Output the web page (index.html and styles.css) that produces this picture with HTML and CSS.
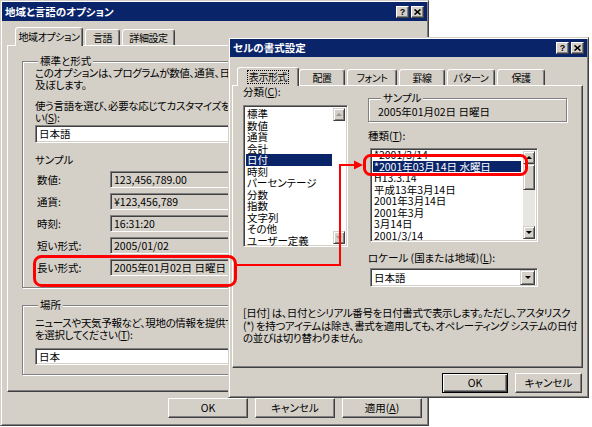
FILE: index.html
```html
<!DOCTYPE html>
<html lang="ja">

<head>
    <meta charset="UTF-8">
    <meta name="viewport" content="width=device-width, initial-scale=1.0">
    <title>地域と言語のオプション / セルの書式設定</title>
    <link rel="stylesheet" href="styles.css">
</head>

<body>
    <div class="desk">

        <!-- back dialog -->
        <section class="win win-region">
            <header class="titlebar">
                <span class="title">地域と言語のオプション</span>
                <span class="caps">
                    <span class="cap">?</span>
                    <span class="cap"><svg width="7" height="6" viewBox="0 0 7 6"><path d="M0.5 0.5 L6.5 5.5 M6.5 0.5 L0.5 5.5" stroke="#000" stroke-width="1.6"/></svg></span>
                </span>
            </header>

            <nav class="tabs">
                <span class="tab on">地域オプション</span>
                <span class="tab">言語</span>
                <span class="tab">詳細設定</span>
            </nav>

            <div class="panel region-panel">
                <fieldset class="group std">
                    <legend>標準と形式</legend>
                    <p class="note">このオプションは、プログラムが数値、通貨、日付、時刻を表示する方法に影響を<br>及ぼします。</p>
                    <p class="note note-lang">使う言語を選び、必要な応じてカスタマイズを行ってくださ<br>い(<u>S</u>):</p>
                    <div class="field lang">日本語</div>
                    <div class="sample-title">サンプル</div>
                    <div class="rows">
                        <div class="row"><span class="row-label">数値:</span><span class="readout">123,456,789.00</span></div>
                        <div class="row"><span class="row-label">通貨:</span><span class="readout">¥123,456,789</span></div>
                        <div class="row"><span class="row-label">時刻:</span><span class="readout">16:31:20</span></div>
                        <div class="row"><span class="row-label">短い形式:</span><span class="readout">2005/01/02</span></div>
                        <div class="row"><span class="row-label">長い形式:</span><span class="readout">2005年01月02日 日曜日</span></div>
                    </div>
                </fieldset>

                <fieldset class="group place">
                    <legend>場所</legend>
                    <p class="note note-place">ニュースや天気予報など、現地の情報を提供するサービスの場所<br>を選択してください(<u>T</u>):</p>
                    <div class="field place-field">日本</div>
                </fieldset>
            </div>

            <footer class="buttons">
                <span class="btn btn-wide">OK</span>
                <span class="btn btn-wide">キャンセル</span>
                <span class="btn btn-wide">適用(<u>A</u>)</span>
            </footer>
        </section>

        <!-- front dialog -->
        <section class="win win-format">
            <header class="titlebar">
                <span class="title">セルの書式設定</span>
                <span class="caps">
                    <span class="cap">?</span>
                    <span class="cap"><svg width="7" height="6" viewBox="0 0 7 6"><path d="M0.5 0.5 L6.5 5.5 M6.5 0.5 L0.5 5.5" stroke="#000" stroke-width="1.6"/></svg></span>
                </span>
            </header>

            <nav class="tabs">
                <span class="tab on"><span class="focus">表示形式</span></span>
                <span class="tab">配置</span>
                <span class="tab">フォント</span>
                <span class="tab">罫線</span>
                <span class="tab">パターン</span>
                <span class="tab">保護</span>
            </nav>

            <div class="panel format-panel">
                <div class="format-grid">
                    <div class="col">
                        <div class="caption">分類(<u>C</u>):</div>
                        <div class="listbox cats">
                            <ul class="items">
                                <li>標準</li>
                                <li>数値</li>
                                <li>通貨</li>
                                <li>会計</li>
                                <li class="sel">日付</li>
                                <li>時刻</li>
                                <li>パーセンテージ</li>
                                <li>分数</li>
                                <li>指数</li>
                                <li>文字列</li>
                                <li>その他</li>
                                <li>ユーザー定義</li>
                            </ul>
                            <div class="vscroll">
                                <span class="sbtn"><i class="arrow up dim"></i></span>
                                <span class="track blank"></span>
                                <span class="sbtn"><i class="arrow down dim"></i></span>
                            </div>
                        </div>
                    </div>

                    <div class="col">
                        <fieldset class="group sample">
                            <legend>サンプル</legend>
                            <div class="sample-value">2005年01月02日 日曜日</div>
                        </fieldset>
                        <div class="caption caption-kind">種類(<u>T</u>):</div>
                        <div class="listbox kinds">
                            <ul class="items">
                                <li>*2001/3/14</li>
                                <li class="sel">*2001年03月14日 水曜日</li>
                                <li>H13.3.14</li>
                                <li>平成13年3月14日</li>
                                <li>2001年3月14日</li>
                                <li>2001年3月</li>
                                <li>3月14日</li>
                                <li>2001/3/14</li>
                            </ul>
                            <div class="vscroll">
                                <span class="sbtn"><i class="arrow up"></i></span>
                                <span class="thumb"></span>
                                <span class="track"></span>
                                <span class="sbtn"><i class="arrow down"></i></span>
                            </div>
                        </div>
                        <div class="caption caption-locale">ロケール (国または地域)(<u>L</u>):</div>
                        <div class="field locale">日本語<span class="sbtn drop"><i class="arrow down"></i></span></div>
                    </div>
                </div>

                <p class="desc">[日付] は、日付とシリアル番号を日付書式で表示します。ただし、アスタリスク<br>(*) を持つアイテムは除き、書式を適用しても、オペレーティング システムの日付<br>の並びは切り替わりません。</p>
            </div>

            <footer class="buttons">
                <span class="btn btn-default">OK</span>
                <span class="btn">キャンセル</span>
            </footer>
        </section>

        <!-- red call-out marks -->
        <svg class="marks" width="592" height="427" viewBox="0 0 592 427">
            <rect x="34.5" y="256.5" width="201" height="29" rx="7" fill="none" stroke="#f00" stroke-width="3"/>
            <rect x="364.5" y="155.5" width="162" height="19" rx="6" fill="none" stroke="#f00" stroke-width="3"/>
            <polyline points="236,265 340,265 340,165 355,165" fill="none" stroke="#f00" stroke-width="2"/>
            <polygon points="354,160.5 363,165 354,169.5" fill="#f00"/>
        </svg>
    </div>
</body>

</html>
```

FILE: styles.css
```css
* {
    box-sizing: border-box;
}

body {
    margin: 0;
    background: #fff;
    color: #000;
    font-family: "Noto Sans CJK JP", "Liberation Sans", sans-serif;
    font-size: 10.5px;
    font-feature-settings: "palt";
    line-height: 12px;
}

p,
ul {
    margin: 0;
    padding: 0;
}

u {
    text-underline-offset: 1px;
}

.desk {
    position: relative;
    width: 592px;
    height: 427px;
    overflow: hidden;
}

/* windows */
.win {
    display: flex;
    flex-direction: column;
    padding: 1px;
    background: #d4d0c8;
    border: 1px solid;
    border-color: #d4d0c8 #404040 #404040 #d4d0c8;
    box-shadow: inset 1px 1px #fff, inset -1px -1px #808080;
    overflow: hidden;
}

.win-region {
    width: 429px;
    height: 426px;
}

.win-format {
    position: absolute;
    left: 228px;
    top: 37px;
    width: 361px;
    height: 361px;
}

.titlebar {
    flex: none;
    display: flex;
    align-items: center;
    justify-content: space-between;
    height: 18px;
    padding: 0 3px 0 3px;
    background: #0a246a;
    color: #fff;
    font-weight: bold;
    white-space: nowrap;
}

.win-region .titlebar {
    height: 19px;
}

.caps {
    display: flex;
    gap: 2px;
}

.cap {
    display: flex;
    align-items: center;
    justify-content: center;
    width: 13px;
    height: 12px;
    background: #d4d0c8;
    border: 1px solid;
    border-color: #fff #404040 #404040 #fff;
    box-shadow: inset -1px -1px #808080;
    color: #000;
    font: bold 9px "Liberation Sans", sans-serif;
}

/* tabs */
.tabs {
    flex: none;
    position: relative;
    z-index: 1;
    display: flex;
    align-items: flex-end;
    gap: 2px;
    white-space: nowrap;
    font-size: 10px;
    letter-spacing: -0.4px;
}

.win-region .tabs {
    padding: 6px 0 0 13px;
}

.win-format .tabs {
    padding: 10px 0 0 7px;
}

.tab {
    display: flex;
    align-items: center;
    justify-content: center;
    height: 16px;
    border: 1px solid;
    border-bottom: 0;
    border-color: #fff #404040 transparent #fff;
    border-radius: 3px 3px 0 0;
    box-shadow: inset -1px 0 #808080;
    background: #d4d0c8;
}

.tab.on {
    position: relative;
    z-index: 2;
    height: 19px;
    margin-bottom: -1px;
    padding-bottom: 1px;
}

.win-region .tab:nth-child(1) { width: 68px; }
.win-region .tab:nth-child(2) { width: 35px; }
.win-region .tab:nth-child(3) { width: 53px; }

.win-format .tab:nth-child(1) { width: 62px; margin-right: -2px; }
.win-format .tab:nth-child(2) { width: 46px; }
.win-format .tab:nth-child(3) { width: 50px; }
.win-format .tab:nth-child(4) { width: 46px; }
.win-format .tab:nth-child(5) { width: 48px; }
.win-format .tab:nth-child(6) { width: 48px; }

.focus {
    padding: 0 1px;
    outline: 1px dotted #000;
    outline-offset: 0;
    line-height: 12px;
}

.panel {
    flex: none;
    border: 1px solid;
    border-color: #fff #404040 #404040 #fff;
    box-shadow: inset -1px -1px #808080;
}

/* group boxes */
.group {
    margin: 0;
    min-width: 0;
    border: 1px solid #808080;
    box-shadow: 1px 1px 0 #fff, inset 1px 1px 0 #fff;
}

.group legend {
    margin-left: 3px;
    padding: 0 2px;
    line-height: 12px;
    background: #d4d0c8;
}

/* sunken fields */
.field,
.readout,
.listbox {
    border: 1px solid;
    border-color: #808080 #fff #fff #808080;
    box-shadow: inset 1px 1px #404040, inset -1px -1px #d4d0c8;
}

.field {
    background: #fff;
    padding: 0 3px;
    white-space: nowrap;
}

.readout {
    flex: 1;
    height: 17px;
    padding: 0 3px;
    line-height: 15px;
    background: #d4d0c8;
    white-space: nowrap;
}

/* back dialog content */
.region-panel {
    height: 347px;
    margin: 0 5px;
    padding: 9px 14px 0;
}

.std {
    padding: 0 10px 11px 12px;
}

.note {
    white-space: nowrap;
    letter-spacing: -0.35px;
}

.note-lang {
    margin-top: 9px;
}

.lang {
    height: 18px;
    margin-top: 1px;
    line-height: 16px;
}

.sample-title {
    margin-top: 11px;
}

.rows {
    display: flex;
    flex-direction: column;
    gap: 5px;
    margin-top: 5px;
}

.row {
    display: flex;
    align-items: center;
    padding-left: 2px;
}

.row-label {
    width: 73px;
}

.place {
    margin-top: 11px;
    padding: 6px 10px 9px 12px;
}

.note-place {
    line-height: 11.5px;
}

.place-field {
    height: 17px;
    margin-top: 8px;
    line-height: 15px;
}

.buttons {
    flex: none;
    display: flex;
    justify-content: flex-end;
    gap: 7px;
    margin-top: 6px;
    padding-right: 5px;
}

.win-format .buttons {
    margin-top: 5px;
}

.btn {
    display: flex;
    align-items: center;
    justify-content: center;
    width: 67px;
    height: 20px;
    border: 1px solid;
    border-color: #fff #404040 #404040 #fff;
    box-shadow: inset -1px -1px #808080;
    white-space: nowrap;
}

.btn-wide {
    width: 80px;
}

.btn-default {
    width: 66px;
    border-color: #000;
    box-shadow: inset 1px 1px #fff, inset -1px -1px #404040, inset -2px -2px #808080;
}

/* front dialog content */
.format-panel {
    height: 283px;
    margin-left: 2px;
    width: 351px;
    padding: 0 10px;
}

.format-grid {
    display: grid;
    grid-template-columns: 105px 199px;
    column-gap: 20px;
}

.col {
    display: flex;
    flex-direction: column;
    align-items: flex-start;
}

.sample {
    width: 199px;
    margin-top: 6px;
    padding: 2px 8px 3px 9px;
}

.caption-kind {
    margin-top: 8px;
}

.caption-locale {
    margin-top: 10px;
}

.listbox {
    display: flex;
    padding: 2px;
    background: #fff;
    overflow: hidden;
}

.cats {
    width: 105px;
    height: 142px;
    margin-top: 7px;
}

.kinds {
    width: 168px;
    height: 94px;
    margin-top: 6px;
    margin-left: 2px;
}

.items {
    flex: 1;
    list-style: none;
    white-space: nowrap;
}

.items li {
    line-height: 11.5px;
    padding-left: 1px;
}

.cats .items {
    margin-right: 1px;
}

.kinds .items li:first-child {
    margin-top: -2px;
}

.kinds .items li.sel {
    margin-right: 2px;
}

.items li.sel {
    background: #0a246a;
    color: #fff;
}

.vscroll {
    flex: none;
    display: flex;
    flex-direction: column;
    width: 12px;
}

.sbtn {
    flex: none;
    display: flex;
    align-items: center;
    justify-content: center;
    width: 12px;
    height: 13px;
    background: #d4d0c8;
    border: 1px solid;
    border-color: #d4d0c8 #404040 #404040 #d4d0c8;
    box-shadow: inset 1px 1px #fff, inset -1px -1px #808080;
}

.thumb {
    flex: none;
    height: 26px;
    background: #d4d0c8;
    border: 1px solid;
    border-color: #d4d0c8 #404040 #404040 #d4d0c8;
    box-shadow: inset 1px 1px #fff, inset -1px -1px #808080;
}

.track {
    flex: 1;
    background: #e8e6e1;
}

.track.blank {
    background: #fff;
}

.arrow {
    width: 0;
    height: 0;
    border-left: 3px solid transparent;
    border-right: 3px solid transparent;
}

.arrow.up {
    border-bottom: 3px solid #000;
}

.arrow.down {
    border-top: 3px solid #000;
}

.arrow.dim.up {
    border-bottom-color: #9a978f;
}

.arrow.dim.down {
    border-top-color: #9a978f;
}

.locale {
    display: flex;
    align-items: center;
    justify-content: space-between;
    width: 168px;
    height: 19px;
    margin-top: 4px;
    margin-left: 2px;
    padding: 0 2px 0 3px;
}

.drop {
    width: 15px;
    height: 15px;
}

.desc {
    margin-top: 20px;
    line-height: 12.5px;
    letter-spacing: -0.35px;
    white-space: nowrap;
}

/* call-out marks over both dialogs */
.marks {
    position: absolute;
    left: 0;
    top: 0;
    z-index: 5;
    pointer-events: none;
}
```
